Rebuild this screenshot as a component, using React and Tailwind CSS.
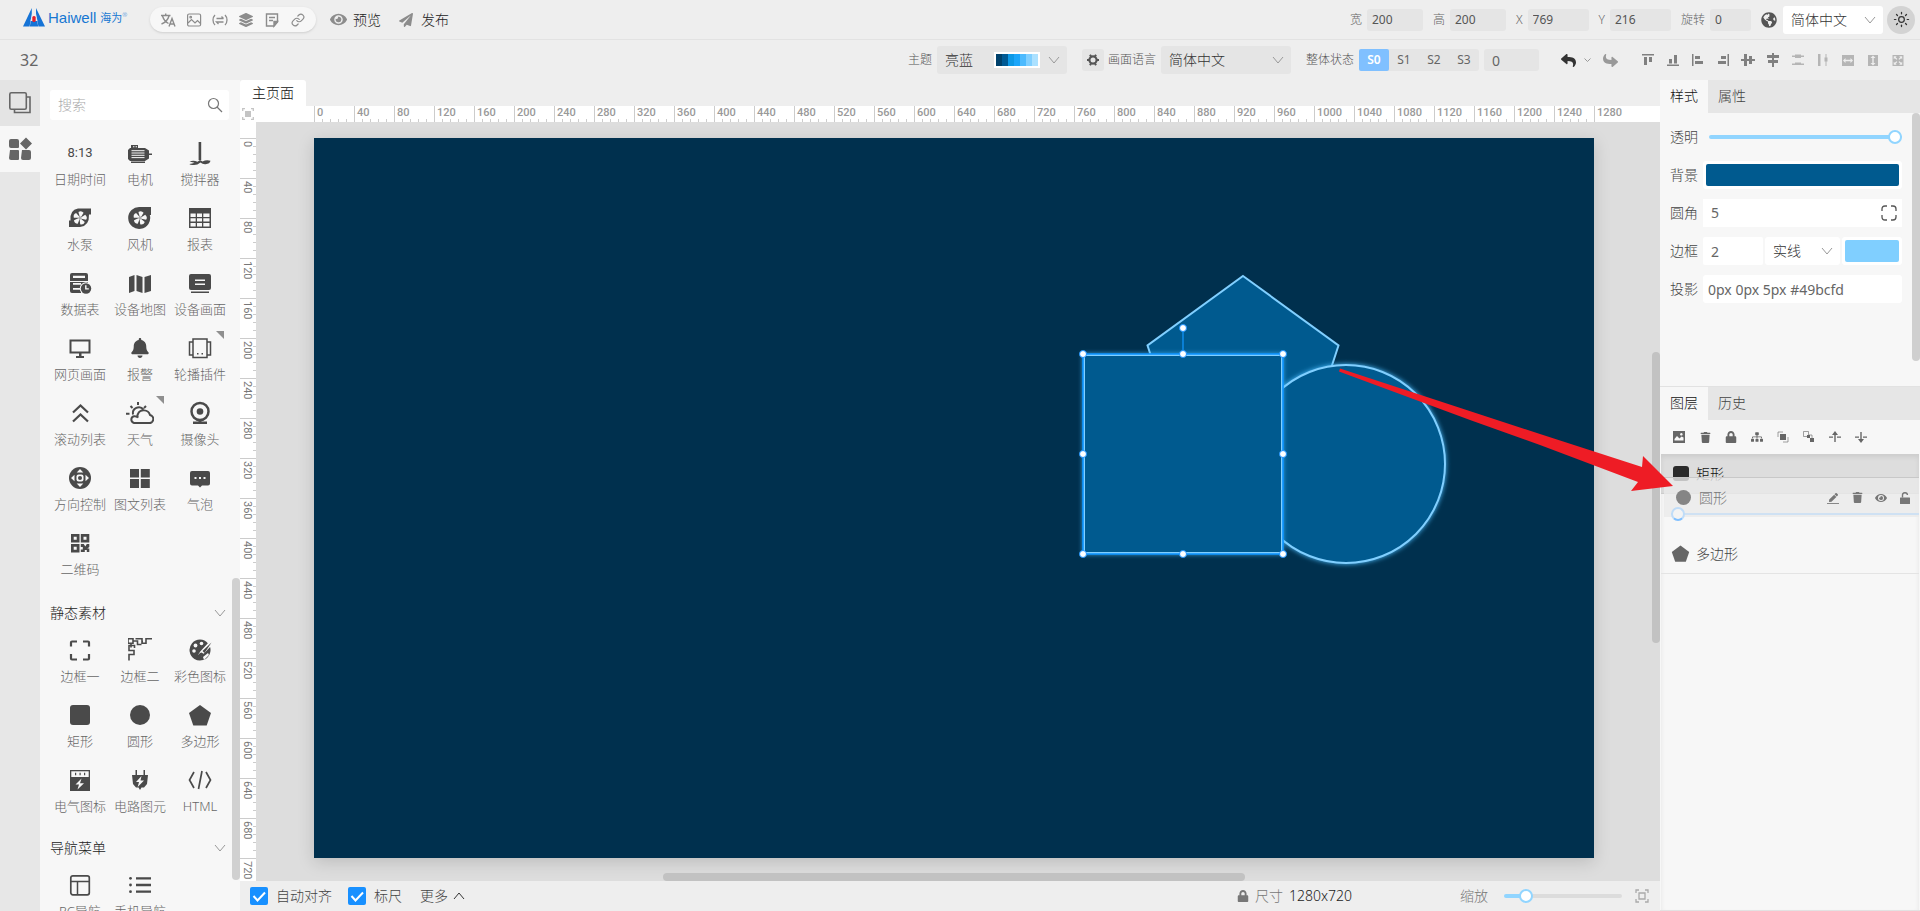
import React from "react";
import {
  FaBell, FaEye, FaGlobeAmericas, FaLayerGroup, FaLock, FaPaperPlane, FaPen, FaReply, FaShare, FaSitemap, FaTrash,
} from "react-icons/fa";
import { Link, Sun } from "lucide-react";

const Icon = ({ children, size = "size-6", box = "0 0 24 24", className = "" }) => (
  <svg viewBox={box} className={`${size} shrink-0 ${className}`} fill="currentColor" aria-hidden="true">
    {children}
  </svg>
);

const Chevron = ({ className = "" }) => (
  <svg viewBox="0 0 12 8" className={`h-2 w-3 shrink-0 ${className}`} fill="none" stroke="currentColor" aria-hidden="true">
    <path d="M1 1l5 6 5-6" />
  </svg>
);

const line = { fill: "none", stroke: "currentColor", strokeWidth: 2 };

const Fan = ({ cx = 12, cy = 12 }) => (
  <g transform={`translate(${cx} ${cy})`} fill="#f7f7f7">
    {[10, 82, 154, 226, 298].map((a) => (
      <path key={a} transform={`rotate(${a})`} d="M-.6-1.4L-2.6-5.6Q0-8 2.6-5.8L1-1.4z" />
    ))}
    <circle r="1.6" />
    <circle r=".8" fill="#4a4a4a" />
  </g>
);

const motor = (
  <Icon>
    <path d="M3 4h7v3H3z" />
    <path d="M5 5.2h1.4v1H5zM7.6 5.2H9v1H7.6z" fill="#f7f7f7" />
    <path d="M2 7h15l4 2.5v8L17 20H2l-2-2V9zM21 12.5h4v1.500h-4zM3 20.5h14V22H3z" />
    <path d="M3.5 9.700h13M3.5 12h13M3.5 14.300h13M3.5 16.600h13" stroke="#f7f7f7" strokeWidth="1" />
  </Icon>
);
const mixer = (
  <Icon>
    <path d="M10.6 1h2.600v18h-2.600z" />
    <path d="M1.5 20.5q4-1.500 8 .2l2.500-1.700 2.500 1.500q4-2 8-.7-.5 3-5 3.500-3 .2-5-1.800-3 2.500-6.500 2.500-4 0-4.500-1 3-.2 5-1.200z" />
  </Icon>
);
const pump = (
  <Icon>
    <path d="M10 2.5h13v6h-2Q21.5 20 12 21H1v-6.500h1.500Q1.5 4 10 2.5z" />
    <Fan />
  </Icon>
);
const blower = (
  <Icon>
    <path d="M12 1h11v8h-1.200A11 11 0 1 1 12 1z" />
    <Fan />
  </Icon>
);
const report = (
  <Icon>
    <path d="M1 2h22v20H1z" />
    <path d="M2.5 7.500h5.200v3.500H2.500zM9 7.500h5v3.500H9zM15.3 7.500h6.200v3.500h-6.200zM2.5 12.200h5.200v3.300H2.500zM9 12.200h5v3.300H9zM15.3 12.200h6.200v3.300h-6.200zM2.5 17h5.200v3.600H2.500zM9 17h5v3.600H9zM15.3 17h6.200v3.600h-6.200z" fill="#f7f7f7" />
  </Icon>
);
const dataTable = (
  <Icon>
    <path d="M4 2h14a2 2 0 0 1 2 2v6H2V4a2 2 0 0 1 2-2zM2 11h18v3H13v8H4a2 2 0 0 1-2-2z" />
    <path d="M5 4.800h12v2.200H5zM5 12h8v1.800H5zM5 17h7v1.800H5z" fill="#f7f7f7" />
    <circle cx="18" cy="17.5" r="6.2" fill="#f7f7f7" />
    <circle cx="18" cy="17.5" r="5.2" />
    <path d="M17.8 14.300v3.600h3" fill="none" stroke="#f7f7f7" strokeWidth="1.4" />
  </Icon>
);
const deviceMap = (
  <Icon>
    <path d="M1 6l5.500-2v16L1 22zM8.500 4l6 2v16l-6-2zM16.500 6L23 4v16l-6.500 2z" />
  </Icon>
);
const deviceScreen = (
  <Icon>
    <path d="M3 3h18a2 2 0 0 1 2 2v12a2 2 0 0 1-2 2H3a2 2 0 0 1-2-2V5a2 2 0 0 1 2-2zM3 20.500h18V22H3z" />
    <path d="M7 8.500h10v1.500H7zM7 12.500h10V14H7z" fill="#f7f7f7" />
  </Icon>
);
const web = (
  <Icon>
    <path {...line} d="M2.500 4.500h19v12h-19z" />
    <path d="M11 17h2.500v3H16v2H8v-2h3z" />
  </Icon>
);
const carousel = (
  <Icon>
    <path {...line} strokeWidth="1.5" d="M5 3h14v18.500H5zM5 6H1.500v13H5M19 6h3.500v13H19" />
    <path d="M9 17h1.500v1.500H9zM13.500 17H15v1.500h-1.500z" />
  </Icon>
);
const rollList = (
  <Icon>
    <path {...line} strokeWidth="2.2" d="M5 11.500l7.500-7 7.500 7M5 20.500l7.500-7 7.500 7" />
  </Icon>
);
const weather = (
  <Icon size="h-6 w-7" box="0 0 28 24">
    <path {...line} d="M7 13.500a6 6 0 0 1 10.500-5M12 1v3M4.500 5l2 2M20 5l-2 2M0 12.700h3.500" />
    <path {...line} d="M8 22h14.500a4 4 0 0 0 1.500-8 6.500 6.500 0 0 0-12.200-.7q-.8 1.700.2 3.500-1-1.800-4-1.600a3.500 3.500 0 0 0 0 6.800z" />
  </Icon>
);
const camera = (
  <Icon>
    <circle {...line} strokeWidth="2.5" cx="12" cy="10.5" r="8.5" />
    <circle cx="12" cy="10.5" r="3.3" />
    <path d="M10.500 19h3v1.500H19V23H5v-2.500h5.500z" />
  </Icon>
);
const direction = (
  <Icon>
    <circle cx="12" cy="12" r="11" />
    <path d="M12 3L15.300 6.500H8.700zM12 21L8.700 17.500h6.600zM3 12L6.500 8.700v6.600zM21 12L17.500 15.300V8.700z" fill="#f7f7f7" />
    <rect x="8.500" y="8.500" width="7" height="7" rx="2" fill="#f7f7f7" />
    <circle cx="12" cy="12" r="2" />
  </Icon>
);
const grid4 = (
  <Icon>
    <path d="M2 3h9v8.500H2zM12.800 3h9v8.500h-9zM2 13h9v9H2zM12.800 13h9v9h-9z" />
  </Icon>
);
const bubble = (
  <Icon>
    <path d="M4 5h16a2 2 0 0 1 2 2v10.500a2 2 0 0 1-2 2h-6L12 21.500 10 19.500H4a2 2 0 0 1-2-2V7a2 2 0 0 1 2-2z" />
    <path d="M6.500 11h2v2h-2zM11 11h2v2h-2zM15.500 11h2v2h-2z" fill="#f7f7f7" />
  </Icon>
);
const qr = (
  <Icon>
    <path d="M3 3h8.500v8.500H3zM12.800 3h8.500v8.500h-8.500zM3 13h8.500v8.500H3zM12.800 13h3l1.500 2.500 1.500-2.500h2.500v3l-2 1.500h2v3.500h-2.500v-2h-2v2h-4v-2.500h2v-2.500h-2z" />
    <path d="M5.700 5.700h3v3h-3zM15.500 5.700h3v3h-3zM5.700 15.700h3v3h-3z" fill="#f7f7f7" />
  </Icon>
);
const corners = (
  <Icon>
    <path {...line} strokeWidth="2.2" d="M3 8.500V4.500q0-1 1-1h5M15 3.500h5q1 0 1 1v4M21 16v4.500q0 1-1 1h-5M9 21.500H4q-1 0-1-1V16" />
  </Icon>
);
const fret = (
  <Icon>
    <path {...line} strokeWidth="1.6" d="M24 .8h-6v4.500h-4V.8H7.500M0 .8h5v4.500H0zM3 5.500v4M5.500 3h4v3.500h4M1 22.500v-6h5v-4H1v-5h5.500v2.500M13.500 3.500h1.500" />
  </Icon>
);
const palette = (
  <Icon>
    <path d="M12 1.500a10.500 10.500 0 1 0 9.500 6L14 15l-1-1 7-8.500A10 10 0 0 0 12 1.500z" />
    <path d="M23.500 4.500L14 14.500l-2 3" stroke="#f7f7f7" strokeWidth="4" fill="none" />
    <path d="M23.500 4.500l-9 8.500 2 2zM13.500 14.500q-3 0-4 6l3.500-1.500q3-1 3-3z" />
    <g fill="#f7f7f7"><circle cx="6" cy="13" r="1.8" /><circle cx="7.500" cy="7.500" r="1.9" /><circle cx="13.500" cy="5.500" r="1.8" /><path d="M15 19l5-4 1 2-5 5z" /></g>
  </Icon>
);
const roundRect = <Icon><rect x="2" y="2" width="20" height="20" rx="3" /></Icon>;
const disc = <Icon><circle cx="12" cy="12" r="10" /></Icon>;
const PentagonShape = ({ size = "size-6" }) => (
  <Icon size={size}><path d="M12 2l11 8-4.300 12.500H5.300L1 10z" /></Icon>
);
const electric = (
  <Icon>
    <path d="M2 2h20v21H2z" />
    <path d="M3.300 3.300h17.400V9H3.300z" fill="#f7f7f7" />
    <path d="M7 4.700h1.200v2.500H7zM11.500 4.700h1.200v2.500h-1.200zM16 4.700h1.200v2.500H16z" />
    <path d="M13.500 10.500l-6 6h3.500l-1.500 5 6.500-6.200h-4z" fill="#f7f7f7" />
  </Icon>
);
const plug = (
  <Icon>
    <path d="M7.500 2H9v5H7.500zM15.500 2H17v5h-1.500zM4 7h16l-1 9-3 3.500h-2.500L12 22l-1.500-2.500H8L5 16z" />
    <path d="M13.500 8l-5.500 6h3l-1.300 5 6.300-6.500h-3.500z" fill="#f7f7f7" />
  </Icon>
);
const html = (
  <Icon>
    <path {...line} strokeWidth="1.7" d="M6 4L1.500 12 6 20M18 4l4.500 8L18 20M14 3l-3.500 18" />
  </Icon>
);
const navPc = (
  <Icon>
    <rect {...line} strokeWidth="1.7" x="2.800" y="2.800" width="18.500" height="19" rx="2" />
    <path {...line} strokeWidth="1.5" d="M3 8.500h18M9.500 8.500V22" />
  </Icon>
);
const navMobile = (
  <Icon>
    <path {...line} strokeWidth="2.3" d="M8 5.300h15M8 12h15M8 18.700h15" />
    <circle cx="2.500" cy="5.300" r="1.4" /><circle cx="2.500" cy="12" r="1.4" /><circle cx="2.500" cy="18.700" r="1.4" />
  </Icon>
);

const components = [
  { label: "日期时间", icon: <span className="font-['Roboto'] text-[13px] leading-6 font-normal">8:13</span> },
  { label: "电机", icon: motor },
  { label: "搅拌器", icon: mixer },
  { label: "水泵", icon: pump },
  { label: "风机", icon: blower },
  { label: "报表", icon: report },
  { label: "数据表", icon: dataTable },
  { label: "设备地图", icon: deviceMap },
  { label: "设备画面", icon: deviceScreen },
  { label: "网页画面", icon: web },
  { label: "报警", icon: <FaBell className="size-5" /> },
  { label: "轮播插件", icon: carousel, more: true },
  { label: "滚动列表", icon: rollList },
  { label: "天气", icon: weather, more: true },
  { label: "摄像头", icon: camera },
  { label: "方向控制", icon: direction },
  { label: "图文列表", icon: grid4 },
  { label: "气泡", icon: bubble },
  { label: "二维码", icon: qr },
];
const materials = [
  { label: "边框一", icon: corners },
  { label: "边框二", icon: fret },
  { label: "彩色图标", icon: palette },
  { label: "矩形", icon: roundRect },
  { label: "圆形", icon: disc },
  { label: "多边形", icon: <PentagonShape /> },
  { label: "电气图标", icon: electric },
  { label: "电路图元", icon: plug },
  { label: "HTML", icon: html },
];
const menus = [
  { label: "PC导航", icon: navPc },
  { label: "手机导航", icon: navMobile },
];

const ItemGrid = ({ items }) => (
  <div className="grid grid-cols-3 px-2.5">
    {items.map((it) => (
      <button key={it.label} type="button" className="relative flex h-[65px] flex-col items-center gap-1 pt-[5px] whitespace-nowrap">
        <span className="flex h-6 items-center text-[#4a4a4a]">{it.icon}</span>
        <span className="text-[13px] leading-5 text-[#666]">{it.label}</span>
        {it.more && (
          <svg viewBox="0 0 8 8" className="absolute top-0 right-1.5 size-2" fill="#8f8f8f" aria-hidden="true"><path d="M0 0h8v8z" /></svg>
        )}
      </button>
    ))}
  </div>
);

const Section = ({ title, items }) => (
  <section>
    <button type="button" className="flex h-10 w-full items-center justify-between pr-3.5 pl-2.5 text-sm text-[#222]">
      {title}
      <Chevron className="text-[#999]" />
    </button>
    <ItemGrid items={items} />
  </section>
);

const Picker = ({ label, value, width, tone, gap = "pr-9" }) => (
  <span className={`relative flex h-7 items-center rounded-[3px] ${width} ${tone}`}>
    <select aria-label={label} className={`h-full w-full appearance-none truncate bg-transparent pl-2 text-sm text-[#333] outline-none ${gap}`}>
      <option>{value}</option>
    </select>
    <Chevron className="pointer-events-none absolute right-[7px] text-[#999]" />
  </span>
);

const Num = ({ id, label, value, width, gap = "" }) => (
  <span className={`flex items-center gap-[5px] ${gap}`}>
    <label htmlFor={id} className="text-xs text-[#666]">{label}</label>
    <input id={id} defaultValue={value} className={`h-[22px] rounded-[3px] bg-[#e5e5e5] pl-[5px] text-xs font-normal text-[#555] outline-none ${width}`} />
  </span>
);

const Logo = () => (
  <a href="#home" aria-label="Haiwell 海为" className="flex items-center text-[#1677d2]">
    <svg viewBox="0 0 22 22" className="size-[22px]" aria-hidden="true">
      <path d="M8.800 1v7L6.500 19.500H0zM13 1v7l2.500 11.500H22z" fill="#1573d6" />
      <path d="M7.800 14h6.400l1 5.500H6.800z" fill="#1573d6" />
      <path d="M10 1.500L7.500 14h7L12 1.500z" fill="#eee" opacity=".8" />
      <rect x="9.300" y="9" width="3.400" height="6" rx="1.5" fill="#e5202b" />
    </svg>
    <span className="ml-[3px] font-['Liberation_Sans'] text-[15px] leading-6">Haiwell</span>
    <span className="ml-1 text-[11px] leading-6 font-normal">海为</span>
    <sup className="text-[6px]">®</sup>
  </a>
);

const headerTools = [
  ["翻译", <svg viewBox="0 0 16 16" className="size-4" fill="none" stroke="currentColor" strokeWidth="1.4"><path d="M1 3.500h9.500M5.700 1.500v2M2.500 4q1.500 5 6 7.500M9 4q-1.500 5.500-7.500 8M9 14.500l3-8 3 8M10 12h4" /></svg>],
  ["图片", <svg viewBox="0 0 16 16" className="size-4" fill="none" stroke="currentColor" strokeWidth="1.2"><rect x="1.600" y="2" width="13" height="12" rx="1.5" /><path d="M2 11l3.500-3.500L9 11l2.500-2.500 3 3" /><circle cx="4.700" cy="5.200" r=".8" /></svg>],
  ["变量", <svg viewBox="0 0 16 16" className="size-4" fill="none" stroke="currentColor" strokeWidth="1.3"><path d="M3 3Q1 5 1 8t2 5M13 3q2 2 2 5t-2 5M4.500 6.500h7M9.500 4.500l2 2M11.500 10h-7l2 2" /></svg>],
  ["图层", <FaLayerGroup className="size-3.5" />],
  ["记录", <svg viewBox="0 0 16 16" className="size-4" fill="none" stroke="currentColor" strokeWidth="1.4"><path d="M2.500 2h11v8l-3.500 4H2.500zM5 5.500h6M5 8.500h4" /><path d="M13.500 9.500H10V14z" fill="currentColor" /></svg>],
  ["链接", <Link className="size-3.5" />],
];

const alignIcons = [
  ["顶对齐", false, "M1 1h12v1.500H1zM3 4h3v8H3zM8 4h3v5H8z"],
  ["底对齐", false, "M1 11.500h12V13H1zM3 6h3v4.500H3zM8 2h3v8.500H8z"],
  ["左对齐", false, "M1 1h1.500v12H1zM4 3h5v3H4zM4 8h8v3H4z"],
  ["右对齐", false, "M11.500 1H13v12h-1.500zM5 3h5v3H5zM2 8h8v3H2z"],
  ["垂直居中", false, "M0 6h3V1h3v5h2V3h3v3h3v2h-3v3H8V8H6v5H3V8H0z"],
  ["水平居中", false, "M6 0h2v2h5v3H8v2h4v3H8v4H6v-4H2V7h4V5H1V2h5z"],
  ["垂直分布", true, "M1 2.500h12V4H1zM4 1.500h6V2.500H4zM4 4h6V5H4zM1 10.500h12V12H1zM4 9.500h6V10.500H4z"],
  ["水平分布", true, "M2 1h2.500v12H2zM9.500 1h1v3.500h-1zM9.500 8.500h1V13h-1zM8.500 4.500h3v4h-3z"],
  ["等宽", true, "M1 2h12v11H1V2zm3.500 3L2 7.500 4.500 10V8.200h5V10L12 7.500 9.500 5v1.800h-5z"],
  ["等高", true, "M2 2h10v11H2V2zm5 .5L4.500 5h1.800v5H4.500L7 12.500 9.500 10H7.700V5h1.800z"],
  ["等尺寸", true, "M1.500 2h11v11h-11V2zM2.700 3.200v3l1-1 1.800 1.600.9-.9-1.700-1.700 1-1zm5.500 0l1 1-1.700 1.700.9.9 1.800-1.600 1 1v-3zM2.700 8.800v3h3l-1-1 1.700-1.700-.9-.9-1.800 1.600zm8.500 0l-1 1-1.800-1.600-.9.9 1.700 1.700-1 1h3z"],
];

const hTicks = Array.from({ length: 33 }, (_, i) => i * 40);
const vTicks = Array.from({ length: 19 }, (_, i) => i * 40);
const swatches = ["bg-[#00416b]", "bg-[#005a94]", "bg-[#0d99e6]", "bg-[#1ba6fa]", "bg-[#4cbafe]", "bg-[#80cfff]", "bg-[#ace1ff]"];

const HRuler = () => (
  <div className="flex h-4 overflow-hidden bg-white pl-[58px]">
    {hTicks.map((n) => (
      <div key={n} className="relative h-4 w-10 shrink-0 border-l border-[#ccc] pl-0.5 font-['Roboto'] text-[11px] leading-[14px] font-medium text-[#999]">
        {n}
        {n < 1280 && (
          <svg viewBox="0 0 40 3" className="absolute bottom-0 -left-px h-[3px] w-10" aria-hidden="true">
            <path d="M8 0h1v3H8zM16 0h1v3h-1zM24 0h1v3h-1zM32 0h1v3h-1z" fill="#ccc" />
          </svg>
        )}
      </div>
    ))}
  </div>
);

const VRuler = () => (
  <div className="flex w-4 shrink-0 flex-col overflow-hidden bg-white pt-4">
    {vTicks.map((n) => (
      <div key={n} className="relative flex h-10 w-4 shrink-0 border-t border-[#ccc] pt-0.5">
        <span className="w-3.5 font-['Roboto'] text-[11px] leading-[14px] font-normal text-[#777] [writing-mode:vertical-rl]">{n}</span>
        {n < 720 && (
          <svg viewBox="0 0 3 40" className="absolute -top-px right-0 h-10 w-[3px]" aria-hidden="true">
            <path d="M0 8h3v1H0zM0 16h3v1H0zM0 24h3v1H0zM0 32h3v1H0z" fill="#ccc" />
          </svg>
        )}
      </div>
    ))}
  </div>
);

const handles = [[869, 190], [769, 216], [869, 216], [969, 216], [769, 316], [969, 316], [769, 416], [869, 416], [969, 416]];

const Artboard = () => (
  <svg viewBox="0 0 1280 720" className="h-[720px] w-[1280px] shrink-0 bg-[#00304e] shadow-[0_4px_16px_rgba(0,0,0,0.15)]" role="img" aria-label="主页面">
    <defs>
      <filter id="glow" x="-20%" y="-20%" width="140%" height="140%">
        <feDropShadow dx="0" dy="0" stdDeviation="2.5" floodColor="#49bcfd" />
      </filter>
    </defs>
    <path d="M929 138l95.500 69.500L988 319H870l-36.500-111.500z" fill="#005a8f" stroke="#80cfff" strokeWidth="2" />
    <circle cx="1032" cy="326" r="99" fill="#005a8f" stroke="#80cfff" strokeWidth="2" filter="url(#glow)" />
    <rect x="770" y="217" width="198" height="198" fill="#005a8f" stroke="#80cfff" strokeWidth="2" filter="url(#glow)" />
    <path d="M769 216h200v200H769z" fill="none" stroke="#0a93ff" strokeWidth="1.6" />
    <path d="M869 192v24" stroke="#0a7fd4" strokeWidth="2" />
    {handles.map(([x, y]) => (
      <circle key={`${x}-${y}`} cx={x} cy={y} r="3.5" fill="#fff" stroke="#1890ff" />
    ))}
  </svg>
);

const range =
  "appearance-none rounded-full [&::-webkit-slider-thumb]:size-3.5 [&::-webkit-slider-thumb]:appearance-none [&::-webkit-slider-thumb]:rounded-full [&::-webkit-slider-thumb]:border-2 [&::-webkit-slider-thumb]:border-[#91d5ff] [&::-webkit-slider-thumb]:bg-white";

const Check = ({ label }) => (
  <label className="flex items-center gap-2">
    <span className="relative flex size-[18px] items-center justify-center">
      <input type="checkbox" defaultChecked className="size-[18px] appearance-none rounded-[2px] bg-white checked:bg-[#1890ff]" />
      <svg viewBox="0 0 18 18" className="pointer-events-none absolute size-[18px]" fill="none" stroke="#fff" strokeWidth="2" aria-hidden="true">
        <path d="M3.500 9l4 4.500 7.500-8" />
      </svg>
    </span>
    {label}
  </label>
);

const Tabs = ({ items }) => (
  <div className="flex h-[33px] shrink-0 bg-[#e6e6e6] text-sm" role="tablist">
    {items.map((t, i) => (
      <button key={t} type="button" role="tab" aria-selected={i === 0} className={`px-2.5 pb-0.5 ${i === 0 ? "bg-[#f7f7f7] text-[#111]" : "text-[#444]"}`}>
        {t}
      </button>
    ))}
  </div>
);

const Row = ({ id, label, children }) => (
  <div className="flex h-7 items-center gap-[5px]">
    <label htmlFor={id} className="w-7 shrink-0 text-sm text-[#444]">{label}</label>
    {children}
  </div>
);

const layerTools = [
  ["图片", <Icon size="size-3" box="0 0 12 12"><path fillRule="evenodd" d="M0 0h12v12H0zm1.500 9.500h9v-3L8.500 5.500 6.500 7.500 4 5 1.500 8zM8.300 2a1.300 1.300 0 1 0 .1 0z" /></Icon>],
  ["删除", <FaTrash className="size-[11px]" />],
  ["锁定", <FaLock className="size-3" />],
  ["组合", <FaSitemap className="size-3" />],
  ["上移", <Icon size="size-3" box="0 0 12 12"><path d="M3 3h6v6H3z" /><path fill="none" stroke="currentColor" strokeOpacity=".6" d="M1 6V1h5M11 6v5H6" /></Icon>],
  ["下移", <Icon size="size-3" box="0 0 12 12"><path d="M4 4h3v3H4zM7 7h4v4H7z" /><path fill="none" stroke="currentColor" strokeOpacity=".6" d="M.5 5.500v-5h5v5zM6 4h3v3" /></Icon>],
  ["置顶", <Icon size="size-3" box="0 0 12 12"><path d="M5.300 3.500h1.400V11H5.300zM6 0l3 4H3zM0 5.500h4v1.200H0zM8 5.500h4v1.200H8z" /></Icon>],
  ["置底", <Icon size="size-3" box="0 0 12 12"><path d="M5.300 1h1.400v7.500H5.300zM6 12L3 8h6zM0 5.500h4v1.200H0zM8 5.500h4v1.200H8z" /></Icon>],
];

export default function App() {
  return (
    <div className="relative flex h-screen flex-col overflow-hidden bg-[#eee] font-['Noto_Sans','Noto_Sans_CJK_SC',sans-serif] text-sm font-light text-[#444]">
      <header className="flex h-10 shrink-0 items-center border-b border-[#e2e2e2] pr-[5px] pl-[23px]">
        <div className="w-[127px] shrink-0 pb-1"><Logo /></div>
        <nav className="flex h-[25px] w-[166px] shrink-0 items-center justify-between rounded-full bg-[#f7f7f7] px-2.5 text-[#8c8c8c] shadow-sm">
          {headerTools.map(([name, icon]) => (
            <button key={name} type="button" aria-label={name} className="flex size-4 items-center justify-center">{icon}</button>
          ))}
        </nav>
        <button type="button" className="ml-3.5 flex items-center gap-1.5 text-[#222]"><FaEye className="size-[17px] text-[#8c8c8c]" />预览</button>
        <button type="button" className="ml-[18px] flex items-center gap-2 text-[#222]"><FaPaperPlane className="size-3.5 text-[#8c8c8c]" />发布</button>
        <div className="ml-auto flex items-center">
          <Num id="w" label="宽" value="200" width="w-14" />
          <Num id="h" label="高" value="200" width="w-14" gap="ml-2.5" />
          <Num id="x" label="X" value="769" width="w-[61px]" gap="ml-2.5" />
          <Num id="y" label="Y" value="216" width="w-[61px]" gap="ml-2.5" />
          <Num id="r" label="旋转" value="0" width="w-[41px]" gap="ml-2.5" />
          <FaGlobeAmericas className="mr-1.5 ml-2.5 size-4 text-[#555]" />
          <Picker label="语言" value="简体中文" width="w-[100px]" tone="bg-white" gap="pr-6" />
          <button type="button" aria-label="切换主题" className="ml-1 flex size-7 items-center justify-center rounded-full bg-[#d3d3d3] text-[#333]"><Sun className="size-[17px]" strokeWidth={1.75} /></button>
        </div>
      </header>

      <div className="flex h-10 shrink-0 items-center pr-2.5 pl-5">
        <h1 className="text-base font-normal text-[#666]">32</h1>
        <div className="ml-auto flex items-center text-xs text-[#555]">
          <span>主题</span>
          <span className="relative ml-[5px] flex h-7 w-[130px] items-center rounded-[3px] bg-[#e5e5e5]">
            <select aria-label="主题" className="h-full w-full appearance-none bg-transparent pl-2 text-sm text-[#333] outline-none"><option>亮蓝</option></select>
            <span className="pointer-events-none absolute right-[27px] flex border-2 border-white">
              {swatches.map((c) => <i key={c} className={`h-3 w-1.5 ${c}`} />)}
            </span>
            <Chevron className="pointer-events-none absolute right-[7px] text-[#999]" />
          </span>
          <button type="button" aria-label="主题设置" className="mr-1 ml-[15px] flex size-[22px] items-center justify-center rounded-[3px] bg-[#e5e5e5] text-[#555]">
            <svg viewBox="0 0 12 12" className="size-3" aria-hidden="true">
              <circle cx="6" cy="6" r="3.6" fill="none" stroke="currentColor" strokeWidth="2.2" />
              <path d="M0 6h2M10 6h2M3 .8l1 1.700M8 9.500l1 1.700M9 .8L8 2.500M4 9.500L3 11.200" stroke="currentColor" strokeWidth="2" />
            </svg>
          </button>
          <span>画面语言</span>
          <span className="ml-[5px]"><Picker label="画面语言" value="简体中文" width="w-[130px]" tone="bg-[#e5e5e5]" /></span>
          <span className="ml-[15px]">整体状态</span>
          <div className="ml-[5px] flex h-[22px] rounded-[3px] bg-[#e5e5e5]">
            {["S0", "S1", "S2", "S3"].map((s, i) => (
              <button key={s} type="button" className={`w-[30px] rounded-[2px] text-xs ${i === 0 ? "bg-[#80c0ff] font-semibold text-white" : "font-normal text-[#666]"}`}>{s}</button>
            ))}
          </div>
          <input aria-label="状态值" defaultValue="0" className="ml-[5px] h-[22px] w-[55px] rounded-[3px] bg-[#e5e5e5] pl-2 text-sm font-normal text-[#666] outline-none" />
          <button type="button" aria-label="撤销" className="ml-[22px] text-[#333]"><FaReply className="size-[15px]" /></button>
          <button type="button" aria-label="撤销记录" className="ml-2 text-[#999]"><svg viewBox="0 0 7 5" className="h-[5px] w-[7px]" fill="none" stroke="currentColor"><path d="M.5.5l3 3 3-3" /></svg></button>
          <button type="button" aria-label="重做" className="mr-[17px] ml-3 text-[#999]"><FaShare className="size-[15px] -scale-y-100" /></button>
          {alignIcons.map(([name, dim, d]) => (
            <button key={name} type="button" aria-label={name} className={`flex h-6 w-[25px] items-center justify-center ${dim ? "text-[#b5b5b5]" : "text-[#808080]"}`}>
              <Icon size="size-3.5" box="0 0 14 14"><path fillRule="evenodd" d={d} /></Icon>
            </button>
          ))}
        </div>
      </div>

      <div className="flex min-h-0 flex-1">
        <nav className="flex w-10 shrink-0 flex-col bg-[#e7e7e7] text-[#666]">
          <button type="button" aria-label="页面" className="flex h-[46px] items-center justify-center bg-[#e4e4e4]">
            <svg viewBox="0 0 24 24" className="size-6" fill="none" stroke="currentColor" strokeWidth="1.6" aria-hidden="true">
              <rect x="1.800" y="1.800" width="16.500" height="16.500" rx="1.5" /><path d="M18.500 6h3.500v15.500H6.500V18.500" />
            </svg>
          </button>
          <button type="button" aria-label="组件" className="flex h-[46px] items-center justify-center bg-[#f7f7f7]">
            <Icon><path d="M3 2h6a2 2 0 0 1 2 2v6a1 1 0 0 1-1 1H3a2 2 0 0 1-2-2V4a2 2 0 0 1 2-2zM2 13h8a1 1 0 0 1 1 1v8a1 1 0 0 1-1 1H3a2 2 0 0 1-2-2zM14 13h7a2 2 0 0 1 2 2v6a2 2 0 0 1-2 2h-6a2 2 0 0 1-2-2zM18 .5l6 6-6 6-6-6z" /></Icon>
          </button>
        </nav>

        <aside className="relative flex w-[200px] shrink-0 flex-col bg-[#f7f7f7]">
          <div className="mt-2.5 mr-[11px] ml-2.5 flex h-[30px] shrink-0 items-center rounded-[3px] bg-white pr-1.5 pl-2">
            <input aria-label="搜索" placeholder="搜索" className="w-full min-w-0 bg-transparent text-sm outline-none placeholder:text-[#aaa]" />
            <svg viewBox="0 0 16 16" className="size-4 shrink-0" fill="none" stroke="#777" strokeWidth="1.2" aria-hidden="true"><circle cx="6.500" cy="6.500" r="5" /><path d="M10 10l5 5" /></svg>
          </div>
          <div className="min-h-0 flex-1 overflow-hidden pt-4">
            <ItemGrid items={components} />
            <div className="h-0.5" />
            <Section title="静态素材" items={materials} />
            <Section title="导航菜单" items={menus} />
          </div>
          <div className="absolute right-0 bottom-[31px] h-[302px] w-2 rounded-full bg-[#d0d0d0]" />
        </aside>

        <main className="flex min-w-0 flex-1 flex-col">
          <div className="flex h-[26px] shrink-0">
            <button type="button" className="w-[66px] rounded-t-[3px] bg-white text-sm text-[#111]">主页面</button>
          </div>
          <div className="flex shrink-0 bg-white">
            <div className="flex size-4 items-center justify-center text-[#c4c4c4]">
              <Icon size="size-3" box="0 0 12 12"><path d="M3 3h6v6H3z" /><path fill="none" stroke="currentColor" strokeWidth="1.3" d="M.7 3V.7H3M9 .7h2.300V3M11.300 9v2.300H9M3 11.300H.7V9" /></Icon>
            </div>
            <div className="min-w-0 flex-1"><HRuler /></div>
          </div>
          <div className="flex min-h-0 flex-1">
            <VRuler />
            <div className="relative min-w-0 flex-1 overflow-hidden bg-[#ddd] pt-4 pl-[58px]">
              <Artboard />
              <div className="absolute top-[230px] right-0 h-[291px] w-2 rounded-full bg-[#c2c2c2]" />
              <div className="absolute bottom-0 left-[407px] h-2 w-[582px] rounded-full bg-[#c2c2c2]" />
            </div>
          </div>
          <footer className="flex h-[30px] shrink-0 items-center pr-[11px] pl-2.5">
            <Check label="自动对齐" />
            <span className="ml-4"><Check label="标尺" /></span>
            <button type="button" className="ml-[18px] flex items-center gap-[5px]">更多<Chevron className="rotate-180 text-[#333]" /></button>
            <span className="ml-auto flex items-center gap-1.5 text-[#777]"><FaLock className="size-3 text-[#777]" />尺寸<span className="text-[#222]">1280x720</span></span>
            <label htmlFor="zoom" className="ml-[108px] text-[#777]">缩放</label>
            <input id="zoom" type="range" defaultValue="14" className={`ml-4 h-1 w-[118px] bg-[linear-gradient(to_right,#91d5ff_18%,#dcdcdc_18%)] ${range}`} />
            <button type="button" aria-label="适应窗口" className="ml-[13px] text-[#aaa]">
              <Icon size="size-3.5" box="0 0 14 14"><path fill="none" stroke="currentColor" strokeWidth="1.3" d="M4 4h6v6H4zM1 4V1h3M10 1h3v3M13 10v3h-3M4 13H1v-3" /></Icon>
            </button>
          </footer>
        </main>

        <aside className="flex w-[260px] shrink-0 flex-col border-b border-[#e2e2e2] bg-[#f7f7f7]">
          <div className="relative flex h-[306px] shrink-0 flex-col">
            <Tabs items={["样式", "属性"]} />
            <div className="flex flex-col gap-2.5 pt-2.5 pr-[18px] pl-2.5">
              <Row id="opacity" label="透明">
                <input id="opacity" type="range" defaultValue="100" className={`ml-1.5 h-1 min-w-0 flex-1 bg-[#91d5ff] ${range}`} />
              </Row>
              <Row label="背景">
                <button type="button" aria-label="背景颜色" className="h-7 flex-1 rounded-[3px] bg-white p-[3px]"><span className="block h-full rounded-[2px] bg-[#005a8f]" /></button>
              </Row>
              <Row id="radius" label="圆角">
                <span className="flex h-7 min-w-0 flex-1 items-center bg-white pr-[5px] pl-2">
                  <input id="radius" defaultValue="5" className="w-full min-w-0 flex-1 bg-transparent font-normal text-[#666] outline-none" />
                  <svg viewBox="0 0 16 16" className="size-4 shrink-0" fill="none" stroke="#555" strokeWidth="1.3" aria-hidden="true"><path d="M1 6V4q0-3 3-3h2M10 1h2q3 0 3 3v2M15 10v2q0 3-3 3h-2M6 15H4q-3 0-3-3v-2" /></svg>
                </span>
              </Row>
              <Row id="border" label="边框">
                <span className="flex min-w-0 flex-1 gap-0.5">
                  <input id="border" defaultValue="2" className="h-7 w-[60px] rounded-[2px] bg-white pl-2 font-normal text-[#666] outline-none" />
                  <Picker label="边框样式" value="实线" width="w-[75px]" tone="bg-white" gap="pr-6" />
                  <button type="button" aria-label="边框颜色" className="h-7 flex-1 rounded-[3px] bg-white p-[3px]"><span className="block h-full rounded-[2px] bg-[#80cfff]" /></button>
                </span>
              </Row>
              <Row id="shadow" label="投影">
                <input id="shadow" defaultValue="0px 0px 5px #49bcfd" className="h-7 min-w-0 flex-1 rounded-[3px] bg-white pl-[5px] font-normal text-[#666] outline-none" />
              </Row>
            </div>
            <div className="absolute top-[33px] right-0 h-[248px] w-2 rounded-full bg-[#cfcfcf]" />
          </div>

          <div className="border-t border-[#e2e2e2]"><Tabs items={["图层", "历史"]} /></div>
          <div className="flex h-[34px] shrink-0 items-center gap-3.5 pl-[13px] text-[#666]">
            {layerTools.map(([name, icon]) => (
              <button key={name} type="button" aria-label={name} className="flex size-3 items-center justify-center">{icon}</button>
            ))}
          </div>
          <ul className="relative mx-px flex-1 overflow-hidden shadow-[inset_0_3px_5px_rgba(0,0,0,0.08)]">
            <li className="flex h-10 items-center gap-[7px] border-b border-[#ccc] bg-[#ddd] pl-3 text-[#111] shadow-[inset_0_3px_5px_rgba(0,0,0,0.08)]">
              <span className="h-[15px] w-4 rounded-[3px] bg-[#2b2b2b]" />矩形
            </li>
            <li className="h-10" />
            <li className="flex h-10 items-center gap-1.5 border-b border-[#e4e4e4] pl-2.5"><span className="flex text-[#666]"><PentagonShape size="size-[19px]" /></span>多边形</li>
            <li className="absolute top-[23px] right-0 left-[3px] h-10 border-t border-[#c8c8c8] bg-[#eaeaea]/80 text-[#777]">
              <div className="flex h-full items-center pl-3">
                <span className="mr-2 size-[15px] rounded-full bg-[#858585]" />圆形
                <span className="mr-2 ml-auto flex gap-3">
                  <button type="button" aria-label="重命名" className="flex size-3 items-center justify-center border-b border-[#888]"><FaPen className="size-[9px]" /></button>
                  <button type="button" aria-label="删除" className="size-3"><FaTrash className="mx-auto size-[11px]" /></button>
                  <button type="button" aria-label="显示" className="size-3"><FaEye className="size-3" /></button>
                  <button type="button" aria-label="解锁" className="size-3"><Icon size="size-3" box="0 0 12 12"><path d="M1.500 5.500h9a.5.5 0 0 1 .5.5v5.500a.5.5 0 0 1-.5.5h-9a.5.5 0 0 1-.5-.5V6a.5.5 0 0 1 .5-.5z" /><path fill="none" stroke="currentColor" strokeWidth="1.4" d="M3.500 5.500V3.500a2.500 2.500 0 0 1 5-.5" /></Icon></button>
                </span>
              </div>
              <input type="range" defaultValue="0" aria-label="图层透明" className="absolute bottom-0.5 left-[7px] h-0.5 w-[248px] appearance-none bg-[#cfe1f3] [&::-webkit-slider-thumb]:size-3.5 [&::-webkit-slider-thumb]:appearance-none [&::-webkit-slider-thumb]:rounded-full [&::-webkit-slider-thumb]:border-2 [&::-webkit-slider-thumb]:border-[#bfdcf8] [&::-webkit-slider-thumb]:border-b-[#80c0ff] [&::-webkit-slider-thumb]:bg-[#f3f3f3]" />
            </li>
          </ul>
        </aside>
      </div>

      <svg className="pointer-events-none absolute top-0 left-0 h-[911px] w-[1920px]" viewBox="0 0 1920 911" fill="#ee1c25" aria-hidden="true">
        <path d="M1340 368.500L1540 434l102 33 1-11 30 30-42 5 7-9-98-37-70-25-131-48.500z" />
      </svg>
    </div>
  );
}
